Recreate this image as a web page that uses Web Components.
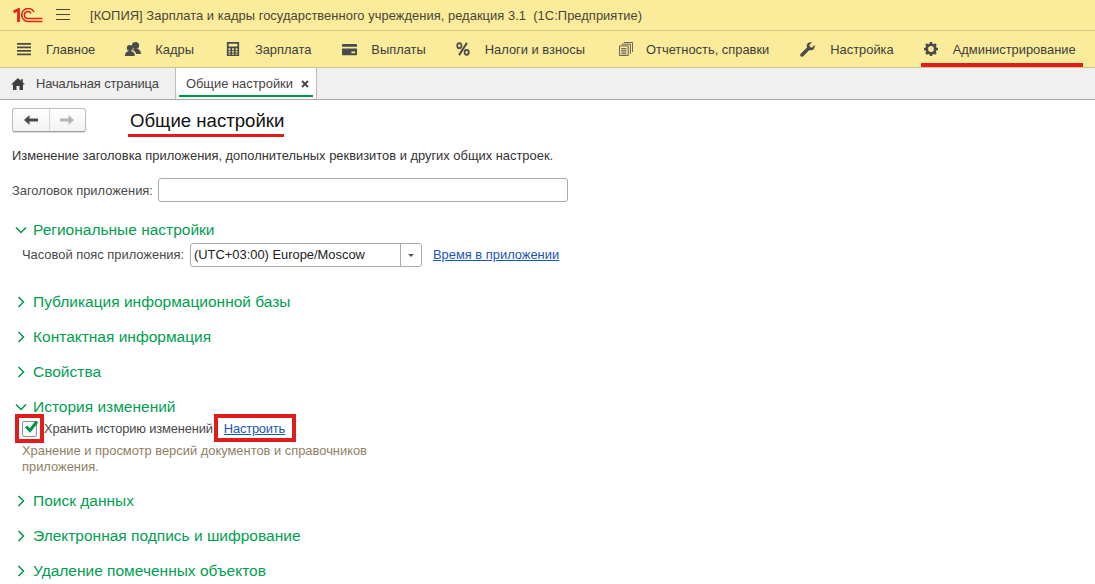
<!DOCTYPE html>
<html lang="ru">
<head>
<meta charset="utf-8">
<title>Общие настройки</title>
<style>
    html, body { margin: 0; height: 100%; overflow: hidden; background: #fff; }
    body { font: 12.9px "Liberation Sans", Arial, sans-serif; color: #333; }
    app-shell { height: 584px; }
</style>
</head>
<body>
<app-shell>
    <title-bar slot="top">[КОПИЯ] Зарплата и кадры государственного учреждения, редакция 3.1&nbsp; (1С:Предприятие)</title-bar>
    <main-menu slot="top">
        <menu-item icon="lines" size="14" gap="15" style="margin-left:17px">Главное</menu-item>
        <menu-item icon="people" size="16" gap="14" style="margin-left:30px">Кадры</menu-item>
        <menu-item icon="calc" size="14" gap="15" style="margin-left:32px">Зарплата</menu-item>
        <menu-item icon="card" size="15" gap="14" style="margin-left:31px">Выплаты</menu-item>
        <menu-item icon="percent" size="14" gap="15" style="margin-left:30px">Налоги и взносы</menu-item>
        <menu-item icon="docs" size="14" gap="13" style="margin-left:34px">Отчетность, справки</menu-item>
        <menu-item icon="wrench" size="15" gap="15" style="margin-left:31px">Настройка</menu-item>
        <menu-item icon="gear" size="14" gap="15" style="margin-left:30px" marked>Администрирование</menu-item>
    </main-menu>
    <tab-bar slot="top">
        <tab-item home>Начальная страница</tab-item>
        <tab-item active>Общие настройки</tab-item>
    </tab-bar>

    <page-head>Общие настройки</page-head>
    <p-note>Изменение заголовка приложения, дополнительных реквизитов и других общих настроек.</p-note>
    <form-row>Заголовок приложения:</form-row>

    <settings-group open style="margin-top:18px" label="Региональные настройки">
        <zone-row></zone-row>
    </settings-group>
    <settings-group style="margin-top:25px" label="Публикация информационной базы"></settings-group>
    <settings-group style="margin-top:17px" label="Контактная информация"></settings-group>
    <settings-group style="margin-top:17px" label="Свойства"></settings-group>
    <settings-group open style="margin-top:17px" label="История изменений">
        <history-row></history-row>
    </settings-group>
    <settings-group style="margin-top:16px" label="Поиск данных"></settings-group>
    <settings-group style="margin-top:17px" label="Электронная подпись и шифрование"></settings-group>
    <settings-group style="margin-top:17px" label="Удаление помеченных объектов"></settings-group>
</app-shell>

<script>
const ICONS = {
    lines: `<path d="M0 1h16v2.200H0zM0 5h16v2.200H0zM0 9h16v2.200H0zM0 13h16v2.200H0z" fill="#4a4a4a"/>`,
    people: `<g fill="#4a4a4a"><circle cx="10.500" cy="4.500" r="3.600"/><circle cx="4.800" cy="7" r="3"/><path d="M0 15c0-3.500 2-5 4.800-5s5 1.500 5 5z"/><path d="M7.500 9c1-1 2-1.300 3.500-1.300 3 0 5 2 5 5.300h-5c-.3-1.800-1.500-3.200-3.500-4z"/></g>`,
    calc: `<path fill-rule="evenodd" fill="#4a4a4a" d="M1 0h14v16H1zM3 2v3h10V2zM3 7v2h2V7zM7 7v2h2V7zM11 7v2h2V7zM3 10v2h2v-2zM7 10v2h2v-2zM11 10v2h2v-2zM3 13v1.500h2V13zM7 13v1.500h2V13zM11 13v1.500h2V13z"/>`,
    card: `<path fill-rule="evenodd" fill="#4a4a4a" d="M0 3q0-1 1-1h14q1 0 1 1v2H0zM0 7h16v6q0 1-1 1H1q-1 0-1-1zM10 10v2h4v-2z"/>`,
    percent: `<g fill="none" stroke="#4a4a4a" stroke-width="2"><ellipse cx="3.800" cy="4.200" rx="2.400" ry="2.900"/><ellipse cx="12.200" cy="11.800" rx="2.400" ry="2.900"/><path d="M12.500 1 3.500 15" stroke-width="2.200"/></g>`,
    docs: `<g fill="none" stroke="#4a4a4a"><path d="M.5 4.500h10v11H.5zM2.500 7.500h6M2.500 9.500h6M2.500 11.500h6M2.500 13.500h6"/><path d="M3 2.500h10v11M5.500.5h10v11"/></g>`,
    wrench: `<path fill="#4a4a4a" d="M15.500 3.200 12.800 6l-2.300-.6-.6-2.300L12.700.4C10.700-.2 8.300.5 7.500 2.500c-.5 1.200-.4 2.400 0 3.400L1 12.200c-1 1-1 2.100-.2 2.900.8.800 2 .8 2.900-.1L10 8.500c1 .4 2.300.4 3.400-.1 2-.9 2.700-3.300 2.100-5.200z"/>`,
    gear: `<path fill-rule="evenodd" fill="#4a4a4a" d="M6.700 1h2.600l.4 2 1.300.6 1.800-1.100 1.800 1.800-1.100 1.800.6 1.300 2 .4v2.600l-2 .4-.6 1.300 1.100 1.800-1.800 1.800-1.800-1.100-1.300.6-.4 2H6.700l-.4-2-1.300-.6-1.800 1.100-1.800-1.800 1.100-1.800-.6-1.300-2-.4V7.800l2-.4.6-1.300-1.100-1.800 1.800-1.800 1.800 1.100 1.300-.6zM8 5.700a3.300 3.300 0 1 0 0 6.600 3.300 3.300 0 0 0 0-6.600z" transform="translate(0 -1)"/>`,
    home: `<path fill="#3f3f3f" d="M7 0 0 6.500h2V12h3.500V8h3v4H12V6.500h2L11.800 4.500V1.200h-2v1.500z"/>`
}

class AppShell extends HTMLElement {
    connectedCallback() {
        const shadow = this.attachShadow({ mode: 'open' })
        shadow.innerHTML = `
        <style>
            :host { display: flex; flex-direction: column; overflow: hidden; }
            .content { padding: 0 0 0 12px; }
        </style>
        <slot name='top'></slot>
        <div class='content'><slot></slot></div>
        `
    }
}

class TitleBar extends HTMLElement {
    connectedCallback() {
        const shadow = this.attachShadow({ mode: 'open' })
        shadow.innerHTML = `
        <style>
            :host {
                display: flex;
                align-items: center;
                height: 30px;
                background: #fbec9c;
                border-bottom: 1px solid #d6c67f;
                color: #4a4436;
                flex: none;
            }
            .logo { margin: 0 0 0 13px; }
            .burger { margin: 0 0 0 13px; }
            .text { margin-left: 20px; white-space: nowrap; letter-spacing: 0.05px; }
        </style>
        <svg class='logo' width='30' height='15' viewBox='0 0 30 15' fill='none'>
            <path d='M0.500 4 5.500 1.500V14' stroke='#e0251b' stroke-width='2.800'/>
            <path d='M21 4A6.500 6.500 0 1 0 15 13.500H29.500' stroke='#e0251b' stroke-width='1.600'/>
            <path d='M18 5.500A3.500 3.500 0 1 0 15 10.500H29.500' stroke='#e0251b' stroke-width='1.600'/>
        </svg>
        <svg class='burger' width='14' height='12' viewBox='0 0 14 12' stroke='#4a4436'>
            <path d='M0 .5h14M0 5.500h14M0 10.500h14'/>
        </svg>
        <span class='text'><slot></slot></span>
        `
    }
}

class MainMenu extends HTMLElement {
    connectedCallback() {
        const shadow = this.attachShadow({ mode: 'open' })
        shadow.innerHTML = `
        <style>
            :host {
                display: flex;
                align-items: stretch;
                height: 36px;
                background: #fbec9c;
                border-bottom: 1px solid #cfc48d;
                flex: none;
            }
        </style>
        <slot></slot>
        `
    }
}

class MenuItem extends HTMLElement {
    connectedCallback() {
        const icon = this.getAttribute('icon')
        const size = this.getAttribute('size')
        const gap = this.getAttribute('gap')
        const shadow = this.attachShadow({ mode: 'open' })
        shadow.innerHTML = `
        <style>
            :host {
                display: flex;
                align-items: center;
                position: relative;
                white-space: nowrap;
                color: #3d3d3d;
            }
            :host([marked])::after {
                content: '';
                position: absolute;
                left: -3px;
                right: -7px;
                bottom: 0;
                height: 4px;
                background: #e21b1b;
            }
            svg { flex: none; width: ${size}px; height: ${size}px; }
            .label { margin-left: ${gap}px; }
        </style>
        <svg viewBox='0 0 16 16'>${ICONS[icon]}</svg>
        <span class='label'><slot></slot></span>
        `
    }
}

class TabBar extends HTMLElement {
    connectedCallback() {
        const shadow = this.attachShadow({ mode: 'open' })
        shadow.innerHTML = `
        <style>
            :host {
                display: flex;
                height: 31px;
                background: #f0f0f0;
                border-bottom: 1px solid #a8a8a8;
                flex: none;
            }
        </style>
        <slot></slot>
        `
    }
}

class TabItem extends HTMLElement {
    connectedCallback() {
        const shadow = this.attachShadow({ mode: 'open' })
        const home = this.hasAttribute('home')
        const active = this.hasAttribute('active')
        shadow.innerHTML = `
        <style>
            :host {
                display: flex;
                align-items: center;
                position: relative;
                white-space: nowrap;
                color: #444;
                padding: 0 16px 0 11px;
                letter-spacing: -0.1px;
            }
            :host([active]) {
                background: #fff;
                padding: 0 7px 0 10px;
                border-left: 1px solid #bdbdbd;
                border-right: 1px solid #bdbdbd;
                letter-spacing: 0;
            }
            :host([active])::after {
                content: '';
                position: absolute;
                left: 3px;
                right: 3px;
                bottom: 2px;
                height: 2px;
                background: #00964a;
            }
            svg.home { width: 14px; height: 12px; margin-right: 11px; }
            svg.close { width: 8px; height: 8px; margin-left: 8px; }
        </style>
        ${home ? `<svg class='home' viewBox='0 0 14 12'>${ICONS.home}</svg>` : ''}
        <slot></slot>
        ${active ? `<svg class='close' viewBox='0 0 8 8' stroke='#444' stroke-width='1.800'><path d='M1 1l6 6M7 1 1 7'/></svg>` : ''}
        `
    }
}

class PageHead extends HTMLElement {
    connectedCallback() {
        const shadow = this.attachShadow({ mode: 'open' })
        shadow.innerHTML = `
        <style>
            :host {
                display: flex;
                align-items: flex-start;
                padding-top: 8px;
            }
            .nav {
                display: flex;
                width: 72px;
                height: 22px;
                border: 1px solid #bdbdbd;
                border-bottom-color: #9d9d9d;
                border-radius: 3px;
                background: linear-gradient(#fff, #f3f3f3);
                box-shadow: 0 1px 1px rgba(0, 0, 0, 0.15);
            }
            .nav span { flex: 1; display: flex; align-items: center; justify-content: center; }
            .nav span + span { border-left: 1px solid #d4d4d4; }
            h1 {
                margin: 1px 0 0 42px;
                padding: 1px 0 2px 2px;
                font-size: 18.600px;
                line-height: 22px;
                font-weight: normal;
                color: #111;
                border-bottom: 3px solid #e21b1b;
                white-space: nowrap;
            }
        </style>
        <div class='nav'>
            <span><svg width='14' height='10' viewBox='0 0 14 10' fill='#4a4a4a'><path d='M0 5 5.500 0v3.500H14v3H5.500V10z'/></svg></span>
            <span><svg width='14' height='10' viewBox='0 0 14 10' fill='#b5b5b5'><path d='M14 5 8.500 0v3.500H0v3h8.500V10z'/></svg></span>
        </div>
        <h1><slot></slot></h1>
        `
    }
}

class PNote extends HTMLElement {
    connectedCallback() {
        const shadow = this.attachShadow({ mode: 'open' })
        shadow.innerHTML = `
        <style>
            :host { display: block; margin-top: 12px; line-height: 14px; color: #333; white-space: nowrap; }
        </style>
        <slot></slot>
        `
    }
}

class FormRow extends HTMLElement {
    connectedCallback() {
        const shadow = this.attachShadow({ mode: 'open' })
        shadow.innerHTML = `
        <style>
            :host { display: flex; align-items: center; margin-top: 15px; color: #4a4a4a; white-space: nowrap; }
            .field {
                margin-left: 5px;
                width: 410px;
                height: 24px;
                box-sizing: border-box;
                border: 1px solid #a9a9a9;
                border-radius: 3px;
                background: #fff;
            }
        </style>
        <slot></slot>
        <div class='field'></div>
        `
    }
}

class SettingsGroup extends HTMLElement {
    connectedCallback() {
        const open = this.hasAttribute('open')
        const shadow = this.attachShadow({ mode: 'open' })
        shadow.innerHTML = `
        <style>
            :host { display: block; }
            .head {
                display: flex;
                align-items: center;
                height: 16px;
                padding-top: 2px;
                font-size: 15.500px;
                color: #00a04f;
                white-space: nowrap;
            }
            svg { width: 12px; height: 12px; margin: 0 6px 0 3px; }
        </style>
        <div class='head'>
            <svg viewBox='0 0 12 12' fill='none' stroke='#00964a' stroke-width='1.500'>
                <path d='${open ? 'M1 3.500 6 8.500 11 3.500' : 'M3.500 1 8.500 6 3.500 11'}'/>
            </svg>
            <span>${this.getAttribute('label')}</span>
        </div>
        <slot></slot>
        `
    }
}

class ZoneRow extends HTMLElement {
    connectedCallback() {
        const shadow = this.attachShadow({ mode: 'open' })
        shadow.innerHTML = `
        <style>
            :host { display: flex; align-items: center; margin: 5px 0 0 10px; color: #4a4a4a; white-space: nowrap; }
            .label { width: 168px; padding-bottom: 2px; }
            .combo {
                display: flex;
                align-items: center;
                width: 232px;
                height: 24px;
                box-sizing: border-box;
                border: 1px solid #a9a9a9;
                border-radius: 3px;
                color: #222;
                padding-left: 3px;
            }
            .combo span { flex: 1; padding-bottom: 2px; }
            .arrow {
                flex: none;
                width: 20px;
                height: 100%;
                border-left: 1px solid #a9a9a9;
                display: flex;
                align-items: center;
                justify-content: center;
            }
            .arrow i { border: 3px solid transparent; border-top: 3px solid #555; border-bottom: 0; }
            a { margin-left: 11px; padding-bottom: 2px; color: #1a56b8; text-decoration: underline; }
        </style>
        <span class='label'>Часовой пояс приложения:</span>
        <div class='combo'><span>(UTC+03:00) Europe/Moscow</span><div class='arrow'><i></i></div></div>
        <a>Время в приложении</a>
        `
    }
}

class HistoryRow extends HTMLElement {
    connectedCallback() {
        const shadow = this.attachShadow({ mode: 'open' })
        shadow.innerHTML = `
        <style>
            :host { display: block; margin: -1px 0 0 3px; color: #4a4a4a; }
            .row { display: flex; align-items: center; height: 29px; white-space: nowrap; }
            .mark {
                flex: none;
                display: flex;
                align-items: center;
                justify-content: center;
                width: 29px;
                height: 29px;
                box-sizing: border-box;
                border: 4px solid #e21b1b;
            }
            .box {
                position: relative;
                width: 13px;
                height: 14px;
                border: 1px solid #8f8f8f;
                border-radius: 2px;
                background: #fafafa;
            }
            .box svg { position: absolute; left: 2px; top: -2px; }
            .text { letter-spacing: -0.15px; }
            .link {
                align-self: flex-start;
                margin-left: 1px;
                padding: 3px 7px 0 6px;
                height: 17px;
                border: 4px solid #e21b1b;
                color: #1a56b8;
                text-decoration: underline;
                letter-spacing: -0.2px;
            }
            .hint {
                margin: 0 0 0 7px;
                width: 360px;
                line-height: 16px;
                color: #8f7f62;
            }
        </style>
        <div class='row'>
            <div class='mark'><div class='box'><svg width='13' height='13' viewBox='0 0 13 13' fill='none' stroke='#00964a' stroke-width='3'><path d='M1 6.500 5 10.500 12 1.500'/></svg></div></div>
            <span class='text'>Хранить историю изменений</span>
            <span class='link'>Настроить</span>
        </div>
        <div class='hint'>Хранение и просмотр версий документов и справочников приложения.</div>
        `
    }
}

customElements.define('app-shell', AppShell)
customElements.define('title-bar', TitleBar)
customElements.define('main-menu', MainMenu)
customElements.define('menu-item', MenuItem)
customElements.define('tab-bar', TabBar)
customElements.define('tab-item', TabItem)
customElements.define('page-head', PageHead)
customElements.define('p-note', PNote)
customElements.define('form-row', FormRow)
customElements.define('settings-group', SettingsGroup)
customElements.define('zone-row', ZoneRow)
customElements.define('history-row', HistoryRow)
</script>
</body>
</html>
